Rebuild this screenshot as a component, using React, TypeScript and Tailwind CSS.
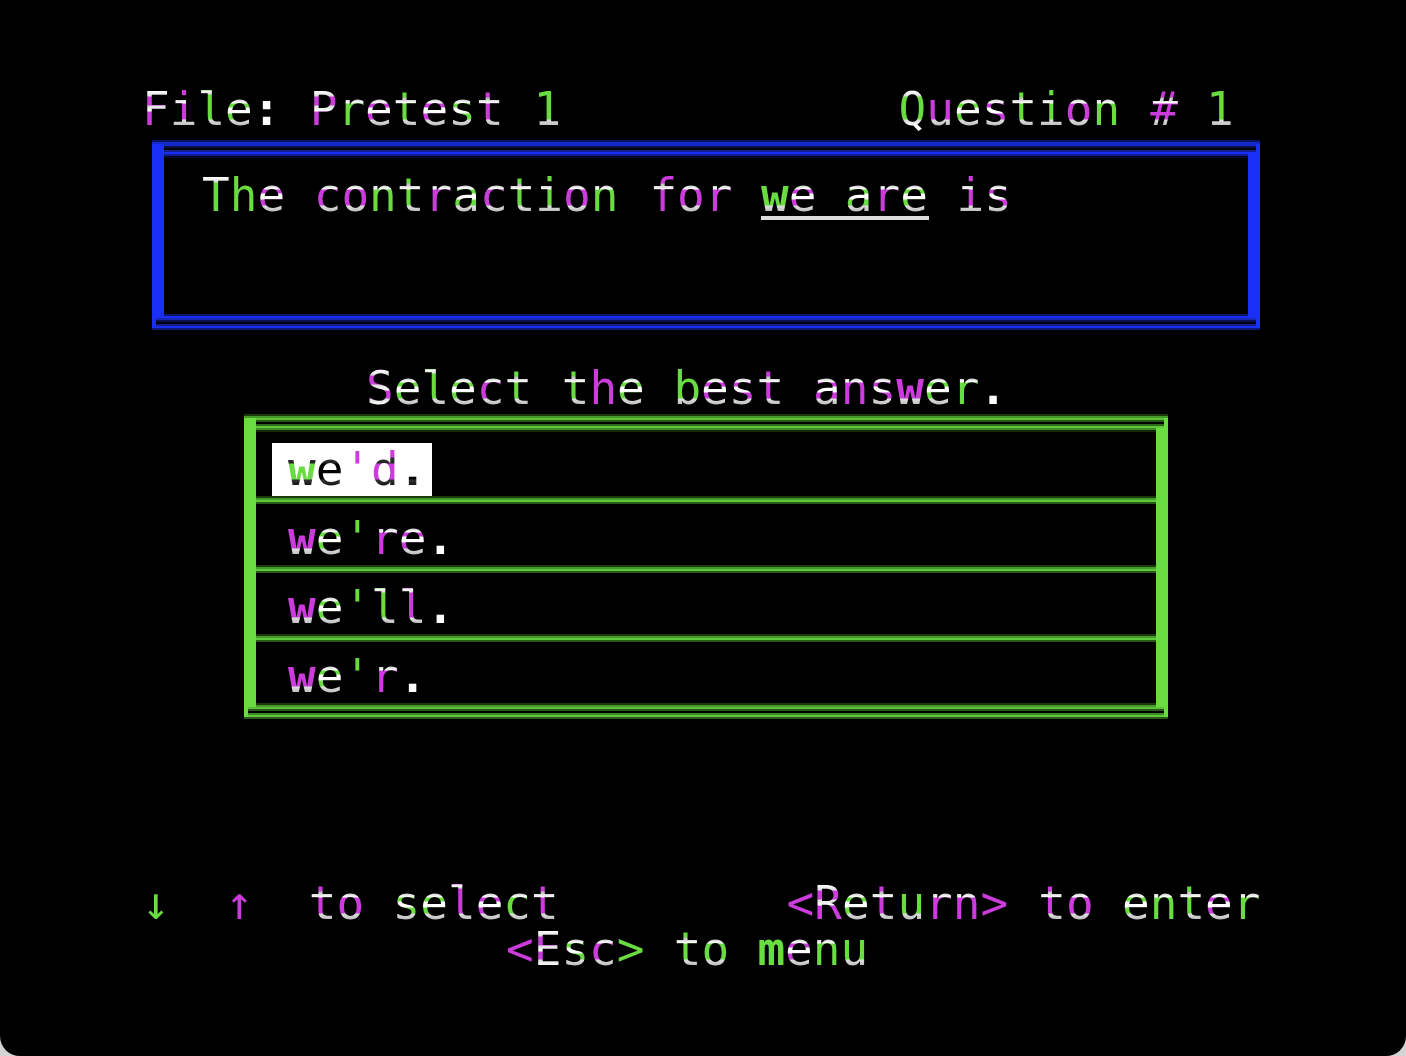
import React, { useState } from "react";

// horizontal strokes are painted white over the tinted stems
const bandsByKind: Record<string, string> = {
  cap: "bg-[linear-gradient(transparent_8px,#fff_9px,#ddd_14px,transparent_15px,transparent_23px,#ddd_24px,#fff_29px,transparent_30px)]",
  round: "bg-[linear-gradient(transparent_8px,#fff_9px,#ddd_14px,transparent_15px,transparent_23px,#ddd_24px,#fff_29px,transparent_30px,transparent_37px,#ddd_38px,#fff_44px)]",
  ring: "bg-[linear-gradient(transparent_8px,#fff_9px,#ddd_14px,transparent_15px,transparent_37px,#ddd_38px,#fff_44px)]",
  full: "bg-[linear-gradient(transparent_15px,#bbb_16px,#fff_21px,transparent_22px,transparent_25px,#fff_26px,#fff_31px,transparent_32px,transparent_37px,#ddd_38px,#bbb_44px)]",
  bowl: "bg-[linear-gradient(transparent_15px,#bbb_16px,#fff_21px,transparent_22px,transparent_37px,#ddd_38px,#bbb_44px)]",
  arch: "bg-[linear-gradient(transparent_15px,#bbb_16px,#fff_21px,transparent_22px)]",
  foot: "bg-[linear-gradient(transparent_37px,#ddd_38px,#bbb_44px)]",
  post: "bg-[linear-gradient(transparent_8px,#fff_9px,#ddd_12px,transparent_13px,transparent_37px,#ddd_38px,#bbb_44px)]",
  top: "bg-[linear-gradient(transparent_8px,#fff_9px,#ddd_14px,transparent_15px)]",
  plain: "",
  dark: "bg-[linear-gradient(transparent_15px,#333_16px,#222_21px,transparent_22px,transparent_37px,#333_38px,#111_44px)]",
};

const kinds: Record<string, string> = {
  F: "cap", P: "cap", R: "cap", T: "top", E: "round", S: "round", Q: "ring",
  e: "full", s: "full", a: "full",
  o: "bowl", c: "bowl", t: "bowl", i: "bowl", "#": "bowl",
  n: "arch", r: "arch", f: "arch",
  u: "foot", w: "foot", b: "foot", d: "foot", "1": "foot",
  l: "post",
};

const heavy = ["w", "m", ".", ":"];

const tints: Record<string, string> = {
  g: "bg-[#68dc40]",
  m: "bg-[#cc3cdc]",
  w: "bg-white",
  k: "bg-black",
};

interface PhosphorProps {
  text: string;
  // one letter per character: g(reen), m(agenta), w(hite) or (blac)k
  tint: string;
  inverted?: boolean;
}

const CELL = 28;

const Phosphor: React.FC<PhosphorProps> = ({ text, tint, inverted }) => {
  let pos = 0;
  return (
    <span className="whitespace-pre">
      {text.split(" ").map((word, w) => {
        const start = pos;
        pos += word.length + 1;
        return (
          <React.Fragment key={w}>
            {w > 0 && " "}
            {word && (
              <span
                className="inline-block"
                style={{ width: word.length * CELL }}
              >
                {word.split("").map((char, i) => {
                  const color = tints[tint[start + i]];
                  const dark = inverted && char !== "'";
                  const kind = dark ? "dark" : kinds[char] || "plain";
                  const weight = heavy.includes(char) ? "font-bold" : "";
                  return (
                    <span
                      key={i}
                      className={`bg-clip-text text-transparent ${color} ${bandsByKind[kind]} ${weight}`}
                    >
                      {char}
                    </span>
                  );
                })}
              </span>
            )}
          </React.Fragment>
        );
      })}
    </span>
  );
};

const frames = {
  blue: {
    side: "border-[#1a2ff5]",
    cap: "bg-[linear-gradient(#0a1566_50%,#1528c8_50%)]",
    top: "bg-[linear-gradient(#1528c8_20%,#081050_20%_40%,#000_40%_60%,#101e90_60%_80%,#1a2ff5_80%)]",
    topInner: "bg-[linear-gradient(#101e90_50%,#03062a_50%)]",
    bottomInner: "bg-[linear-gradient(#0a1566_50%,#1a2ff5_50%)]",
    bottom: "bg-[linear-gradient(#1528b8_20%,#081050_20%_40%,#01020f_40%_60%,#101e90_60%_80%,#1a2ff5_80%)]",
    base: "bg-[#0d1876]",
  },
  green: {
    side: "border-[#68dc40]",
    cap: "bg-[linear-gradient(#1a3a0c_50%,#459a2a_50%)]",
    top: "bg-[linear-gradient(#5cc038_20%,#2a5a18_20%_40%,#000_40%_60%,#2f6a1c_60%_80%,#5cc83a_80%)]",
    topInner: "bg-[linear-gradient(#3f8c26_50%,#122a08_50%)]",
    bottomInner: "bg-[linear-gradient(#1a3a0c_50%,#459a2a_50%)]",
    bottom: "bg-[linear-gradient(#5cc038_20%,#2a5a18_20%_40%,#000_40%_60%,#3f8c26_60%_80%,#5cc83a_80%)]",
    base: "bg-[#2a5a18]",
  },
};

interface FrameProps {
  color: "blue" | "green";
  className?: string;
  children: React.ReactNode;
}

const Frame: React.FC<FrameProps> = ({ color, className, children }) => {
  const f = frames[color];
  return (
    <div className={className}>
      <div className={`h-1 ${f.cap}`} />
      <div className={`border-x-4 ${f.side}`}>
        <div className={`h-[10px] border-l-8 ${f.side} ${f.top}`} />
        <div className={`border-x-8 ${f.side}`}>
          <div className={`h-1 ${f.topInner}`} />
          {children}
          <div className={`h-1 ${f.bottomInner}`} />
        </div>
        <div className={`h-[10px] ${f.bottom}`} />
      </div>
      <div className={`h-0.5 ${f.base}`} />
    </div>
  );
};

const answers = [
  { text: "we'd.", tint: "gkmmk" },
  { text: "we're.", tint: "mggmmw" },
  { text: "we'll.", tint: "mgggmw" },
  { text: "we'r.", tint: "mggmw" },
];

const App: React.FC = () => {
  const [selected, setSelected] = useState(0);

  return (
    <div className="min-h-screen bg-[#d4d4d4]">
      <main className="min-h-screen rounded-b-[20px] bg-black pt-[82px] pr-[144px] pl-[142px] font-['DejaVu_Sans_Mono',monospace] text-[46px] leading-[54px]">
        <header className="flex justify-between pr-7">
          <h1>
            <Phosphor text="File: Pretest 1" tint="mmggw mgmgmgm g" />
          </h1>
          <p>
            <Phosphor text="Question # 1" tint="gmgmggmg m g" />
          </p>
        </header>

        <Frame color="blue" className="mt-1 mr-0.5 ml-2.5">
          <p className="h-[156px] pt-[10px] pl-[38px]">
            <Phosphor
              text="The contraction for "
              tint="ggm mmggmgmggmg mmm "
            />
            <u className="inline-block h-[52px] border-b-4 border-[#ddd] no-underline">
              <Phosphor text="we are" tint="gm gmg" />
            </u>
            <Phosphor text=" is" tint=" mm" />
          </p>
        </Frame>

        <h2 className="mt-[31px] pl-[224px]">
          <Phosphor
            text="Select the best answer."
            tint="mgggmg gmg gmmm mmmmggw"
          />
        </h2>

        <Frame color="green" className="-mt-px mr-[94px] ml-[102px]">
          <ul>
            {answers.map((answer, i) => (
              <li key={answer.text} className="group">
                {i > 0 && (
                  <div className="h-2 bg-[linear-gradient(#1a3a0c_25%,#459a2a_25%_50%,#5cc83a_50%_75%,#2a5a18_75%)]" />
                )}
                <button
                  type="button"
                  aria-pressed={i === selected}
                  onClick={() => setSelected(i)}
                  className="block w-full pt-2 pl-4 text-left leading-[53px] group-first:pt-[11px]"
                >
                  <span
                    className={`inline-block pr-1 pl-4 align-top ${i === selected ? "bg-white" : ""}`}
                  >
                    <Phosphor
                      text={answer.text}
                      tint={answer.tint}
                      inverted={i === selected}
                    />
                  </span>
                </button>
              </li>
            ))}
          </ul>
        </Frame>

        <footer className="mt-[161px] leading-[46px]">
          <div className="flex justify-between">
            <p>
              <Phosphor text="↓  ↑  to select" tint="g  m  mm ggmmgm" />
            </p>
            <p>
              <Phosphor text="<Return> to enter" tint="mmgmgmmm mm gggmg" />
            </p>
          </div>
          <p className="pl-[364px]">
            <Phosphor text="<Esc> to menu" tint="mmgmg gg gmgg" />
          </p>
        </footer>
      </main>
    </div>
  );
};

export default App;
